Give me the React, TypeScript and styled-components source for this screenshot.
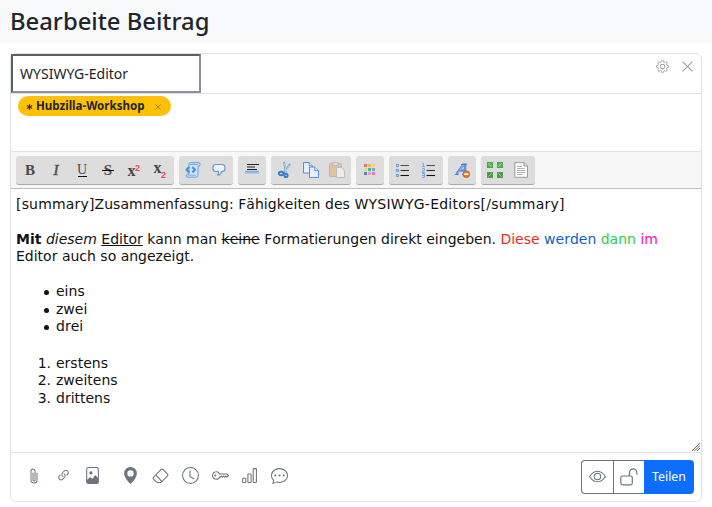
import React from "react";
import styled, { createGlobalStyle } from "styled-components";
import {
  BsPaperclip, BsLink45Deg, BsFileImage, BsGeoAltFill, BsEraser, BsClock,
  BsKey, BsBarChart, BsChatDots, BsEye, BsGear,
} from "react-icons/bs";

const Global = createGlobalStyle`
  *{box-sizing:border-box}
  body{margin:0;background:#fff;color:#212529;font-family:"Noto Sans",sans-serif;overflow:hidden}
`;
const Page = styled.div`width:712px;height:507px;`;
const Header = styled.header`
  height:43px;padding:0 10px;background:#f8f9fa;border-top-left-radius:3px;
  h1{margin:0;font-size:23.8px;line-height:42px;font-weight:500;white-space:nowrap}
`;
const Card = styled.main`
  margin:10px 10px 0;width:692px;height:449px;border:1px solid #dee2e6;border-radius:6px;
  display:flex;flex-direction:column;
`;
const TitleRow = styled.div`
  height:40px;border-bottom:1px solid #dee2e6;display:flex;align-items:flex-start;justify-content:space-between;
`;
const TitleInput = styled.div`
  width:190px;height:39px;border:2px solid;border-color:#5d5f66 #8f909e #8f909e #5d5f66;
  padding:0 7px;font-size:14px;line-height:36px;white-space:nowrap;
`;
const CornerTools = styled.div`
  display:flex;align-items:center;gap:13px;margin:5px 8px 0 0;color:#9a9fa5;height:14px;
`;
const Categories = styled.div`height:58px;padding:2px 7px;border-bottom:1px solid #dee2e6;`;
const Tag = styled.span`
  display:flex;align-items:center;width:153px;height:20px;border-radius:10px;background:#ffc107;
  padding:0 8px 1px;font-size:11.55px;line-height:18px;font-weight:700;white-space:nowrap;
  > svg{margin-left:auto;margin-right:2px;margin-top:2px}
`;
const Star = styled.span`width:10px;display:flex;align-items:center;margin-top:2px;`;
const Toolbar = styled.div`
  height:37px;padding:4px 5px;background:#f7f7f7;border-bottom:1px solid #c0c0c0;display:flex;gap:5px;
`;
const Group = styled.div`
  height:29px;padding:1px;display:flex;background:#ddd;border-radius:3px;border-bottom:1px solid #aaa;
`;
const Tool = styled.span<{ $faded?: boolean }>`
  width:26px;height:26px;padding:5px;display:flex;opacity:${p => (p.$faded ? 0.45 : 1)};
  svg{width:16px;height:16px;overflow:visible}
`;
const Editor = styled.section`
  position:relative;height:264px;padding:6.6px 5px;border-bottom:1px solid #dee2e6;
  font-family:"DejaVu Sans",sans-serif;font-size:14px;line-height:17.6px;color:#111;
  font-kerning:none;
  p{margin:0 0 17.6px;white-space:nowrap}
  p + ul{margin-top:-.5px}
`;
const Spaced = styled.span<{ $by: number }>`letter-spacing:${p => p.$by}px;`;
const Color = styled.span<{ $c: string }>`color:${p => p.$c};`;
const List = styled.ul<{ $numbered?: boolean }>`
  margin:0 0 18.7px;padding:0;list-style:none;counter-reset:item;
  li{display:flex;counter-increment:item}
  li::before{
    content:${p => (p.$numbered ? 'counter(item) "."' : '""')};
    ${p => (p.$numbered
      ? "width:35px;margin-right:5px;text-align:right;"
      : "width:5px;height:5px;margin:7px 7px 0 28px;border-radius:50%;background:#111;")}
  }
`;
const Resize = styled.svg`position:absolute;right:1px;bottom:1px;`;
const Footer = styled.footer`
  flex:1;display:flex;align-items:flex-start;justify-content:space-between;padding:7px 7px 0 14px;
`;
const Actions = styled.div`display:flex;color:#6c757d;`;
const Action = styled.span<{ $w: number; $s?: number }>`
  width:${p => p.$w}px;height:31px;display:flex;align-items:center;justify-content:center;
  svg{flex:none;width:${p => p.$s || 16}px;height:${p => p.$s || 16}px}
`;
const Buttons = styled.div`display:flex;height:34px;`;
const OutlineButton = styled.button<{ $first?: boolean }>`
  width:${p => (p.$first ? 32 : 31)}px;height:34px;padding:0 0 1px;background:#fff;color:#6c757d;
  border:1px solid #6c757d;border-right:0;border-radius:${p => (p.$first ? "4px 0 0 4px" : "0")};
  display:flex;align-items:center;justify-content:center;
`;
const ShareButton = styled.button`
  width:50px;height:34px;padding:0 0 2px;border:0;background:#0d6efd;color:#fff;border-radius:0 4px 4px 0;
  font:12.3px "Noto Sans",sans-serif;
`;

const Letter = ({ ch, variant }: { ch: string; variant: string }) => (
  <svg viewBox="0 0 16 16" fill="#4a4a4a">
    <text x="8" y={variant === "under" ? 12 : 13} textAnchor="middle" fontFamily="Liberation Serif, serif" fontSize={variant === "under" ? 14 : 15}
      fontWeight={variant === "bold" || variant === "strike" ? 700 : 400} fontStyle={variant === "italic" ? "italic" : "normal"}
      stroke="#555" strokeWidth={variant === "italic" ? 0.5 : 0}>{ch}</text>
    {variant === "under" && <path d="M4 14.5h9" stroke="#111" />}
    {variant === "strike" && <path d="M2 8.5h12" stroke="#111" />}
  </svg>
);
const Script = ({ sup }: { sup?: boolean }) => (
  <svg viewBox="0 0 16 16">
    <text x="1.5" y={sup ? 14 : 11} fontFamily="Liberation Serif, serif" fontSize="16" fontWeight="700" fill="#444">x</text>
    <text x="9" y={sup ? 8.5 : 15.5} fontFamily="Liberation Sans, sans-serif" fontSize="9" fontWeight="700" fill="#ff4058">2</text>
  </svg>
);
const Code = () => (
  <svg viewBox="0 0 16 16" strokeLinejoin="round">
    <path d="M5 .7h9.5q1.3 1.3 0 3.3H13v9.2q-.2 2-2 2H2q-1.5-1 0-3h2V2Q4 .8 5 .7Z" fill="#cfe5ff" stroke="#659ddd" />
    <path d="M5 2.5h8M3 13.2h8" stroke="#79aadf" />
    <path d="M4.2 5 1.5 7.7l2.7 2.7M7.3 5 10 7.7l-2.7 2.7" fill="none" stroke="#4a92dc" strokeWidth="2.2" />
  </svg>
);
const Quote = () => (
  <svg viewBox="0 0 16 16"><path d="M5 2.5h6q3 .3 3 3v1q0 3-3 3h-.5q0 3-4 3.8 1.6-1.3 1-3.8H5q-3 0-3-3v-1q0-3 3-3Z" fill="#edf6ff" stroke="#6796d2" strokeWidth="1.2" /></svg>
);
const Rule = () => (
  <svg viewBox="0 0 16 16"><path d="M3 2.5h12M3 5h8M3 7.5h10" stroke="#222" strokeWidth="1.1" /><path d="M1.5 9h13v2h-13z" fill="#8fbaf0" stroke="#6fa2e2" strokeWidth=".5" /></svg>
);
const Cut = () => (
  <svg viewBox="0 0 16 16" fill="none">
    <path d="m7 0 2 10M13 2.2 6.8 11" stroke="#739dca" strokeWidth="2" /><path d="m7.2.7 2 8.5M12.5 3 8 10" stroke="#d5e5f2" strokeWidth=".8" />
    <ellipse cx="4.2" cy="11.5" rx="2.4" ry="1.7" stroke="#367fc5" strokeWidth="1.9" /><circle cx="9" cy="13.4" r="1.6" stroke="#367fc5" strokeWidth="1.9" />
  </svg>
);
const Copy = () => (
  <svg viewBox="0 0 16 16" fill="#e4f0ff" stroke="#578fd5"><path d="M.5.5h5.7L9.5 4v7H.5Z" /><path d="M6.2.5V4h3.3" /><path d="M6.5 5h5.2l3.8 3.5v7h-9Z" /><path d="M11.7 5v3.5h3.8" /></svg>
);
const Paste = () => (
  <svg viewBox="0 0 16 16"><rect x=".5" y="1.5" width="12" height="13" rx="1" fill="#dca65b" stroke="#ad8050" /><rect x="4" y=".5" width="5" height="3" fill="#ddd" stroke="#999" /><path d="M7.5 5.5h5l3 3v7h-8Z" fill="#fff" stroke="#999" /></svg>
);
const Palette = () => {
  const colors = ["#ff6b65", "#ffad6c", "#f4d66a", "#c8e79d", "#43c463", "#60adf1", "#5d83bd", "#d6a0e2", "#ff72b2"];
  return <svg viewBox="0 0 16 16">{colors.map((c, i) => <rect key={c} x={2 + (i % 3) * 4} y={2 + Math.floor(i / 3) * 4} width="3" height="3" fill={c} />)}</svg>;
};
const Bullets = ({ numbered }: { numbered?: boolean }) => (
  <svg viewBox="0 0 16 16">
    {numbered && <path d="M1.5 1.5h1v3m-1.5 0h3M1 6.5h2.5v2H1.5v2H4M1 11.5h2.5v4H1m0-2h2.5" fill="none" stroke="#75a7e5" strokeWidth="1" />}
    {[3.5, 8.5, 13.5].map((y, i) => <g key={y}>
      {!numbered && <rect x="1.5" y={y - 1} width="2" height="2" fill="#a7ccf5" stroke="#6294d1" strokeWidth=".8" />}
      <path d={`M5.5 ${y}h8.5`} stroke={["#555", "#333", "#111"][i]} strokeWidth="1.1" />
    </g>)}
  </svg>
);
const ClearFormat = () => (
  <svg viewBox="0 0 16 16"><path d="m2.5 12 7-9.5h1.5v9.5M6 8.5h5" fill="none" stroke="#5d91dd" strokeWidth="2.5" /><path d="M.7 12.5h4M8 12.5h4M7 2.5h6" stroke="#5181c9" strokeWidth="1.1" /><path d="m4 11 5.5-8" stroke="#a7c9f5" strokeWidth=".7" /><circle cx="12.3" cy="12.2" r="3.4" fill="#e8731e" stroke="#bd5010" strokeWidth=".6" /><path d="M10.2 12.2h4.2" stroke="#fff" strokeWidth="1.8" /></svg>
);
const Maximize = () => (
  <svg viewBox="0 0 16 16">
    {[[0, 0], [10, 0], [0, 10], [10, 10]].map(([x, y]) => <g key={`${x}-${y}`} transform={`translate(${x} ${y})`}>
      <rect x=".4" y=".4" width="5.2" height="5.2" fill={y ? "#449c43" : "#5bb654"} stroke="#439b43" strokeWidth=".8" />
      <path d={x === y ? "m1.3 1.3 3.4 3.4" : "M4.7 1.3 1.3 4.7"} stroke="#a5d39a" strokeWidth="1" />
    </g>)}
  </svg>
);
const Source = () => (
  <svg viewBox="0 0 16 16"><path d="M1.8.7h9.4L14.5 4v11.3H1.8Z" fill="#fff" stroke="#999" /><path d="M11 .7V4h3.5" fill="#ddd" stroke="#999" /><path d="M4 4.5h5M4 6.5h7.5M4 8.5h8M4 10.5h8M4 12.5h6" stroke="#aaa" strokeWidth=".9" /></svg>
);
const Unlock = () => (
  <svg width="18" height="18" viewBox="0 0 18 18" fill="none" stroke="currentColor" strokeWidth="1.15"><rect x=".8" y="8" width="11.5" height="8.8" rx="1.8" /><path d="M9.5 8V4.5a3.7 3.7 0 0 1 7.4 0v2.2" /></svg>
);
const Cross = ({ size, color }: { size: number; color: string }) => (
  <svg width={size} height={size} viewBox="0 0 10 10"><path d="m.5.5 9 9m0-9-9 9" fill="none" stroke={color} strokeWidth="1" /></svg>
);

export default function App() {
  return (
    <Page>
      <Global />
      <Header><h1>Bearbeite Beitrag</h1></Header>
      <Card>
        <TitleRow>
          <TitleInput>WYSIWYG-Editor</TitleInput>
          <CornerTools><BsGear size={13} /><Cross size={11} color="#9a9fa5" /></CornerTools>
        </TitleRow>
        <Categories>
          <Tag>
            <Star><svg width="7" height="8" viewBox="0 0 8 8"><path d="M4 .5v7M1 2.3l6 3.4M7 2.3 1 5.7" stroke="#332c16" strokeWidth="1.2" /></svg></Star>
            Hubzilla-Workshop<Cross size={6} color="#765d18" />
          </Tag>
        </Categories>
        <Toolbar>
          <Group>
            <Tool><Letter ch="B" variant="bold" /></Tool><Tool><Letter ch="I" variant="italic" /></Tool>
            <Tool><Letter ch="U" variant="under" /></Tool><Tool><Letter ch="S" variant="strike" /></Tool>
            <Tool><Script sup /></Tool><Tool><Script /></Tool>
          </Group>
          <Group><Tool><Code /></Tool><Tool><Quote /></Tool></Group>
          <Group><Tool><Rule /></Tool></Group>
          <Group><Tool><Cut /></Tool><Tool><Copy /></Tool><Tool $faded><Paste /></Tool></Group>
          <Group><Tool><Palette /></Tool></Group>
          <Group><Tool><Bullets /></Tool><Tool><Bullets numbered /></Tool></Group>
          <Group><Tool><ClearFormat /></Tool></Group>
          <Group><Tool><Maximize /></Tool><Tool><Source /></Tool></Group>
        </Toolbar>
        <Editor>
          <p>
            <Spaced $by={0.17}>[summary]</Spaced><Spaced $by={0.04}>Zusammenfassung: Fähigkeiten des </Spaced>
            <Spaced $by={0.25}>WYSIWYG-Editors[/summary]</Spaced>
          </p>
          <p>
            <b>Mit</b> <i>diesem</i> <u>Editor</u> kann man <s>keine</s> Formatierungen direkt eingeben.{" "}
            <Color $c="#ec2d27">Diese</Color> <Color $c="#0f62c5">werden</Color> <Color $c="#31cf45">dann</Color> <Color $c="#f414c5">im</Color><br />
            Editor auch so angezeigt.
          </p>
          <List><li>eins</li><li>zwei</li><li>drei</li></List>
          <List as="ol" $numbered><li>erstens</li><li>zweitens</li><li>drittens</li></List>
          <Resize width="8" height="8" viewBox="0 0 8 8"><path d="m0 8 8-8M2.5 8 8 2.5M5 8l3-3" stroke="#555" strokeWidth=".9" /></Resize>
        </Editor>
        <Footer>
          <Actions>
            <Action $w={17}><BsPaperclip /></Action>
            <Action $w={42} $s={15}><BsLink45Deg /></Action>
            <Action $w={17} $s={17}><BsFileImage /></Action>
            <Action $w={58} $s={17}><BsGeoAltFill /></Action>
            <Action $w={2} $s={17}><BsEraser /></Action>
            <Action $w={58} $s={17}><BsClock /></Action>
            <Action $w={2} $s={17}><BsKey /></Action>
            <Action $w={57} $s={17}><BsBarChart /></Action>
            <Action $w={3} $s={17}><BsChatDots /></Action>
          </Actions>
          <Buttons>
            <OutlineButton $first><BsEye size={17} /></OutlineButton>
            <OutlineButton><Unlock /></OutlineButton>
            <ShareButton>Teilen</ShareButton>
          </Buttons>
        </Footer>
      </Card>
    </Page>
  );
}
